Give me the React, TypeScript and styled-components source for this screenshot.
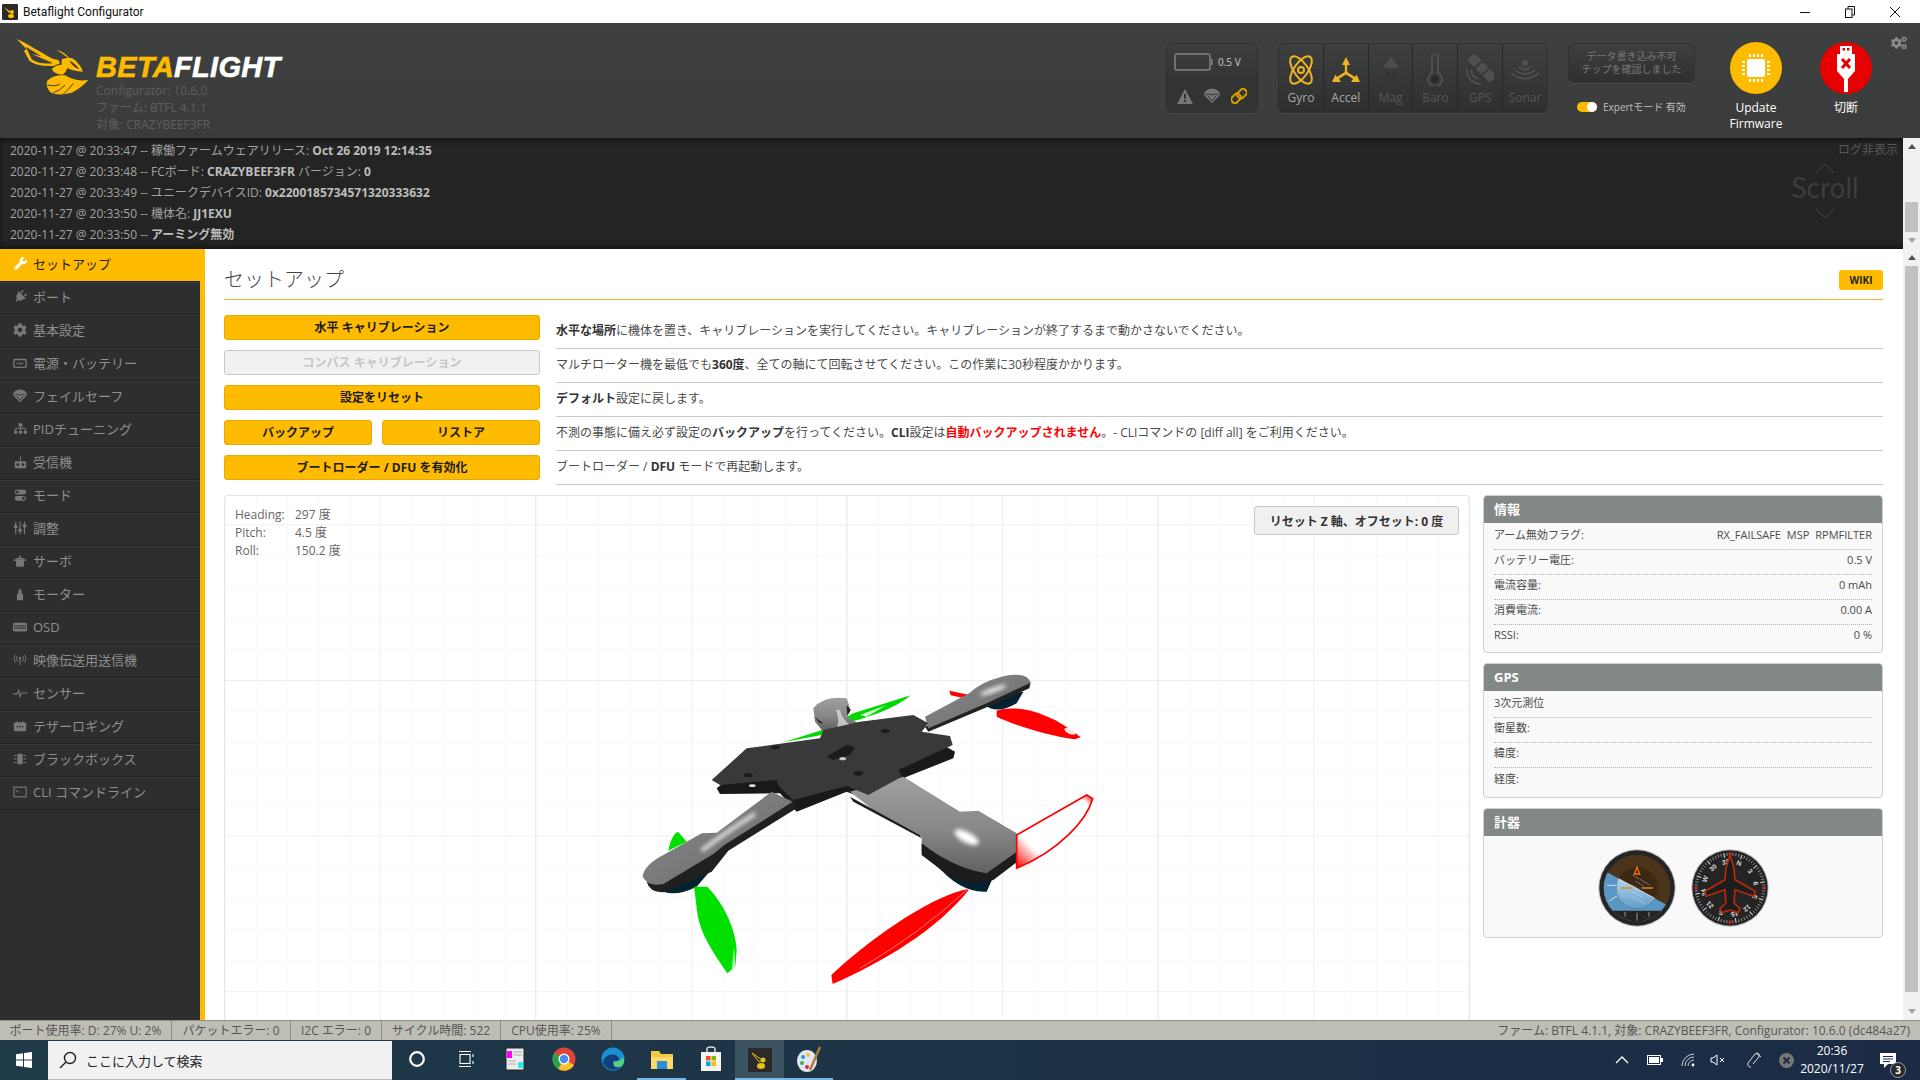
import React from 'react';
import styled, { createGlobalStyle } from 'styled-components';
import { FaWrench, FaPlug, FaCog, FaSitemap, FaCogs } from 'react-icons/fa';

const UI = `"Open Sans", "Noto Sans CJK JP", sans-serif`;
const YEL = '#ffbb00';

const Global = createGlobalStyle`
  html, body { margin: 0; padding: 0; overflow: hidden; background: #fff; }
  * { box-sizing: border-box; }
  #root { width: 1920px; height: 1080px; }
  strong { font-weight: 700; }
`;

const Shell = styled.div`
  width: 1920px; height: 1080px; display: flex; flex-direction: column;
  font-family: ${UI}; font-size: 12px; overflow: hidden;
`;

/* window title */
const TitleBar = styled.div`
  height: 23px; background: #fff; display: flex; align-items: center; flex: none;
  font-family: Roboto, "Noto Sans", sans-serif; font-size: 12px; color: #111; padding: 0 3px 0 2px;
`;
const AppTile = styled.span`
  width: 16px; height: 16px; background: #2b2b2b; margin-right: 5px; display: flex; border-radius: 1px;
`;
const WinControls = styled.div`margin-left: auto; display: flex;`;
const WinBtn = styled.span`
  width: 45px; height: 23px; display: flex; align-items: center; justify-content: center;
`;

/* header */
const Header = styled.header`
  height: 115px; flex: none; display: flex; align-items: flex-start;
  background: linear-gradient(#3f4140, #3a3c3b);
  padding: 20px 13px 0 10px;
`;
const Brand = styled.div`display: flex; align-items: flex-start; margin-right: auto; margin-top: -13px;`;
const BrandText = styled.div`padding-top: 23px; color: #5d5f5e; line-height: 17px;`;
const Wordmark = styled.div`
  font-family: "Liberation Sans", Arial, sans-serif; font-weight: 700; font-style: italic;
  font-size: 29px; line-height: 29px; color: #fff; white-space: nowrap; letter-spacing: 0.3px;
  -webkit-text-stroke: 0.6px currentColor;
`;
const WordYel = styled.span`color: ${YEL};`;

const PanelDark = styled.div`
  border-radius: 6px; border: 1px solid #2f3130; box-shadow: 0 1px 0 #4a4c4b;
  background: linear-gradient(#3e403f, #2e2f2f); overflow: hidden;
`;
const BatteryPanel = styled(PanelDark)`width: 92px; height: 70px; display: flex; flex-direction: column;`;
const BatteryTop = styled.div`
  height: 36px; display: flex; align-items: center; padding-left: 7px; gap: 4px;
  color: #ccc; font-size: 10px; background: linear-gradient(#3d3f3e, #333534);
`;
const BatteryBottom = styled.div`
  flex: 1; display: flex; align-items: center; justify-content: space-around; padding: 0 4px;
  background: #323433;
`;
const SensorPanel = styled(PanelDark)`width: 270px; height: 70px; display: flex; margin-left: 20px;`;
const SensorCell = styled.div<{ $on?: boolean }>`
  flex: 1; display: flex; flex-direction: column; align-items: center; height: 100%;
  border-right: 1px solid #262727; padding-top: 7px; color: ${p => (p.$on ? '#a8a8a8' : '#565756')};
  &:last-child { border-right: none; }
`;
const SensorGlyph = styled.div`height: 38px; display: flex; align-items: center; justify-content: center;`;
const SensorLabel = styled.div`font-size: 12px; line-height: 16px; margin-top: 1px;`;

const MidCol = styled.div`width: 127px; margin-left: 20px; display: flex; flex-direction: column;`;
const FlashBox = styled(PanelDark)`
  height: 40px; color: #767876; font-size: 10px; line-height: 13px; text-align: center; padding-bottom: 1px;
  display: flex; align-items: center; justify-content: center;
`;
const ExpertRow = styled.div`
  display: flex; align-items: center; gap: 6px; margin-top: 17px; padding-left: 9px;
  color: #bdbdbd; font-size: 10px; line-height: 14px; white-space: nowrap;
`;
const Toggle = styled.span`
  width: 20px; height: 10px; border-radius: 5px; background: ${YEL}; display: flex; justify-content: flex-end; flex: none;
`;
const ToggleKnob = styled.span`width: 10px; height: 10px; border-radius: 5px; background: #fff;`;
const RoundCol = styled.div<{ $ml: number }>`
  width: 80px; margin-left: ${p => p.$ml}px; margin-top: -1px; display: flex; flex-direction: column; align-items: center;
  color: #fff; font-size: 12px; line-height: 16px; text-align: center;
`;
const RoundBtn = styled.div<{ $bg: string }>`
  width: 52px; height: 52px; border-radius: 50%; background: ${p => p.$bg}; margin-bottom: 6px;
  display: flex; align-items: center; justify-content: center;
`;
const Gear = styled(FaCogs)`color: #8a8c8b; margin: -8px 0 0 5px; font-size: 16px; flex: none;`;

/* log */
const LogBar = styled.div`
  height: 111px; flex: none; display: flex; background: #242424;
  box-shadow: inset 0 4px 5px -2px #111, inset 0 -4px 5px -2px #111;
`;
const LogBody = styled.div`flex: 1; position: relative; padding: 2px 0 0 10px; color: #a3a3a3; line-height: 21px;`;
const LogLine = styled.div`
  white-space: nowrap; height: 21px;
  strong { color: #bdbdbd; }
`;
const LogHide = styled.div`position: absolute; right: 5px; top: 3px; color: #575757; line-height: 18px;`;
const ScrollHint = styled.div`
  position: absolute; right: 45px; top: 25px; width: 66px; color: #3d3d3d;
  display: flex; flex-direction: column; align-items: center;
  font-family: Lato, sans-serif; font-size: 28px; line-height: 28px;
`;
const ScrollWord = styled.span`padding-bottom: 8px;`;

/* scrollbars */
const ScrollBar = styled.div`width: 17px; flex: none; background: #f1f1f1; display: flex; flex-direction: column;`;
const ScrollTrack = styled.div<{ $top: number }>`flex: 1; padding: ${p => p.$top}px 2px 0;`;
const ScrollThumb = styled.div<{ $h: number }>`height: ${p => p.$h}px; background: #c1c1c1;`;
const ScrollArrow = styled.div`height: 17px; display: flex; align-items: center; justify-content: center; flex: none;`;
const TriUp = styled.span`width: 0; height: 0; border: 4px solid transparent; border-top: none; border-bottom: 5px solid #505050;`;
const TriDown = styled.span`width: 0; height: 0; border: 4px solid transparent; border-bottom: none; border-top: 5px solid #a3a3a3;`;

/* main row */
const MainRow = styled.div`flex: 1; min-height: 0; display: flex;`;
const Nav = styled.nav`width: 205px; flex: none; background: #2e2e2e; border-right: 5px solid ${YEL};`;
const NavItem = styled.div<{ $active?: boolean }>`
  height: 33px; display: flex; align-items: center; font-size: 13px; white-space: nowrap;
  padding: 0 0 4px 13px; gap: 6px;
  background: ${p => (p.$active ? YEL : '#2e2e2e')};
  color: ${p => (p.$active ? '#222' : '#8f8f8f')};
  border-bottom: 1px solid ${p => (p.$active ? '#222' : '#212121')};
  border-top: 1px solid ${p => (p.$active ? YEL : '#393939')};
`;
const NavGlyph = styled.span<{ $active?: boolean }>`
  width: 14px; height: 14px; display: flex; align-items: center; justify-content: center; flex: none;
  color: ${p => (p.$active ? '#fff' : '#787878')};
`;
const TiltPlug = styled(FaPlug)`transform: rotate(45deg) scaleX(-1);`;

const Page = styled.main`flex: 1; min-width: 0; background: #fff; padding: 20px 20px 0 19px; display: flex; flex-direction: column; overflow: hidden;`;
const TitleRow = styled.div`
  height: 31px; flex: none; display: flex; align-items: flex-start; justify-content: space-between;
  border-bottom: 1px solid #f2b632;
`;
const PageTitle = styled.h1`margin: 1px 0 0; font-size: 20px; line-height: 20px; font-weight: 300; color: #444;`;
const WikiBtn = styled.div`
  width: 44px; height: 20px; background: ${YEL}; border-radius: 3px; color: #222; font-weight: 700; font-size: 10px;
  display: flex; align-items: center; justify-content: center; margin-top: 1px;
`;
const ActionGrid = styled.div`display: grid; grid-template-columns: 316px 1fr; column-gap: 16px; margin-top: 15px; flex: none;`;
const BtnCol = styled.div`display: flex; flex-direction: column; gap: 10px; align-self: start;`;
const BtnRow = styled.div`display: flex; justify-content: space-between;`;
const ActionBtn = styled.div<{ $disabled?: boolean; $w?: number }>`
  height: 25px; flex: none; border-radius: 3px; font-weight: 700; font-size: 12px; padding-bottom: 1px;
  display: flex; align-items: center; justify-content: center; white-space: nowrap;
  width: ${p => (p.$w ? `${p.$w}px` : '100%')};
  background: ${p => (p.$disabled ? '#f1f1f1' : YEL)};
  border: 1px solid ${p => (p.$disabled ? '#c8c8c8' : '#e8aa00')};
  color: ${p => (p.$disabled ? '#c6c6c6' : '#1c1c1c')};
`;
const DescCol = styled.div`display: flex; flex-direction: column;`;
const DescRow = styled.div`
  height: 34px; border-bottom: 1px solid #c8c8c8; display: flex; align-items: center; padding-bottom: 3px;
  color: #4a4a4a; font-size: 12px; white-space: nowrap;
  strong { color: #333; }
`;
const RedText = styled.strong`color: #f00 !important;`;

const Lower = styled.div`flex: 1; min-height: 0; display: flex; gap: 13px; margin-top: 10px;`;
const Canvas = styled.div`
  flex: 1; position: relative; border: 1px solid #e6e6e6; border-bottom: none; border-radius: 4px 4px 0 0; overflow: hidden;
  background-color: #fff;
  background-image:
    linear-gradient(90deg, #ececec 1px, transparent 1px),
    linear-gradient(#ececec 1px, transparent 1px),
    linear-gradient(90deg, #f3f3f3 1px, transparent 1px),
    linear-gradient(#f3f3f3 1px, transparent 1px),
    linear-gradient(90deg, #f8f8f8 1px, transparent 1px),
    linear-gradient(#f8f8f8 1px, transparent 1px);
  background-size: 311.2px 100%, 100% 622.4px, 155.6px 100%, 100% 155.6px, 31.12px 100%, 100% 31.12px;
  background-position: 310px 0, 0 184px, 154.6px 0, 0 28.4px, 0 0, 0 28.4px;
`;
const Readout = styled.div`
  position: absolute; left: 10px; top: 10px; display: grid; grid-template-columns: 60px auto;
  color: #666; font-size: 12px; line-height: 18px;
`;
const ResetBtn = styled.div`
  position: absolute; right: 10px; top: 10px; width: 205px; height: 29px;
  background: #f0f0f0; border: 1px solid #c9c9c9; border-radius: 3px; color: #333; font-weight: 700; font-size: 12px;
  display: flex; align-items: center; justify-content: center; white-space: nowrap;
`;
const DroneSvg = styled.svg`position: absolute; left: 395px; top: 164px;`;

const SideCol = styled.div`width: 400px; flex: none; display: flex; flex-direction: column; gap: 10px;`;
const InfoPanel = styled.section`border: 1px solid #d0d0d0; border-radius: 4px; background: #f9f9f9; overflow: hidden; flex: none;`;
const InfoHead = styled.div`
  height: 27px; background: #828885; color: #fff; font-weight: 700; font-size: 13px; line-height: 27px; padding-left: 10px;
`;
const InfoBody = styled.div<{ $pb: number }>`padding: 2px 10px ${p => p.$pb}px;`;
const InfoRow = styled.div`
  height: 25px; display: flex; justify-content: space-between; align-items: center; padding-bottom: 6px;
  color: #4b4b4b; font-size: 11px; border-bottom: 1px dotted #b5b5b5; white-space: nowrap;
  &:last-child { border-bottom: none; }
`;
const Flags = styled.span`word-spacing: 3px;`;
const GaugeBody = styled.div`display: flex; justify-content: center; gap: 15px; padding: 13px 0 10px;`;

/* status */
const StatusBar = styled.footer`
  height: 20px; flex: none; display: flex; background: #bfbeb5; color: #555; font-size: 12px; line-height: 20px;
  border-top: 1px solid #8f8f8a; white-space: nowrap;
`;
const StatusCell = styled.div<{ $w: number }>`width: ${p => p.$w}px; text-align: center; border-right: 1px solid #8f8f8a; flex: none;`;
const StatusRight = styled.div`margin-left: auto; padding-right: 10px;`;

/* task bar */
const TaskBar = styled.div`
  height: 40px; flex: none; display: flex; align-items: stretch; color: #fff;
  background: linear-gradient(90deg, #1f3b49, #1d3347 50%, #1b2b45);
`;
const StartBtn = styled.div`width: 48px; display: flex; align-items: center; justify-content: center; flex: none;`;
const SearchBox = styled.div`
  width: 344px; flex: none; background: #f1f1f1; margin-top: 1px; border-bottom: 1px solid #bbb;
  display: flex; align-items: center; padding-left: 11px; gap: 9px; color: #222; font-size: 13px;
`;
const TaskSlot = styled.div<{ $open?: boolean; $active?: boolean }>`
  width: 49px; flex: none; display: flex; align-items: center; justify-content: center;
  background: ${p => (p.$active ? '#3c5362' : 'transparent')};
  border-bottom: 2px solid ${p => (p.$open ? '#76b9ed' : 'transparent')};
  padding-top: ${p => (p.$open ? 2 : 0)}px;
`;
const Tray = styled.div`margin-left: auto; display: flex; align-items: center; padding-right: 12px;`;
const TrayCell = styled.div<{ $w: number }>`width: ${p => p.$w}px; display: flex; align-items: center; justify-content: center; position: relative;`;
const Clock = styled.div`text-align: center; font-size: 12px; line-height: 18px; white-space: nowrap;`;
const Badge = styled.span`
  position: absolute; right: 2px; bottom: -10px; width: 16px; height: 16px; border-radius: 50%;
  background: #2a2a2a; border: 1px solid #999; color: #fff; font-size: 10px; font-weight: 700; line-height: 14px; text-align: center;
`;

/* drawings */
const Wasp = () => (
  <svg width="86" height="70" viewBox="0 0 258 210" fill={YEL}>
    <path fillRule="evenodd" d="M20 27 L40 36 L150 100 L130 108 Q80 110 58 92 L42 62 L50 58 Z M48 50 L128 100 Q85 104 65 88 L53 62 Z" />
    <path d="M65 72 L145 90 L150 100 L120 95 Z" />
    <path d="M140 60 Q165 65 180 88 Q160 72 140 60 Z" />
    <path fillRule="evenodd" d="M155 88 Q185 76 200 95 Q216 112 218 125 Q190 124 172 114 Q168 128 158 134 Q135 134 125 118 Q135 104 155 104 Z M178 92 Q195 98 208 118 Q188 110 178 92 Z" />
    <path d="M112 152 Q130 134 165 136 Q195 156 235 150 Q212 176 185 188 Q140 200 120 185 Q105 168 112 152 Z" />
    <g stroke="#3c3e3d" strokeWidth="3" fill="none">
      <path d="M112 165 Q140 170 150 162" />
      <path d="M130 188 Q150 182 165 165" />
      <path d="M160 192 Q175 180 190 160" />
    </g>
  </svg>
);

const Battery = () => (
  <svg width="40" height="18" viewBox="0 0 40 18">
    <rect x="1" y="1" width="35" height="16" rx="2" fill="none" stroke="#707170" strokeWidth="2" />
    <rect x="36" y="6" width="3" height="6" fill="#707170" />
  </svg>
);
const Warn = () => (
  <svg width="16" height="15" viewBox="0 0 16 15">
    <path d="M8 0 L16 15 L0 15 Z" fill="#777" />
    <rect x="7" y="5" width="2" height="5" fill="#333" />
    <rect x="7" y="11" width="2" height="2" fill="#333" />
  </svg>
);
const Chute = ({ color = '#777', size = 16 }: { color?: string; size?: number }) => (
  <svg width={size} height={size} viewBox="0 0 16 16">
    <path d="M0 7 A8 6.5 0 0 1 16 7 L8 15 Z" fill={color} />
    <path d="M4 8 L8 13 L12 8 M1 7 Q4 5 8 7 Q12 5 15 7" stroke="#333" strokeWidth="1" fill="none" />
  </svg>
);
const Chain = () => (
  <svg width="16" height="16" viewBox="0 0 16 16" fill="none" stroke="#d99e00" strokeWidth="2">
    <rect x="8" y="0.5" width="7" height="10" rx="3" transform="rotate(45 11 5)" />
    <rect x="1" y="5.5" width="7" height="10" rx="3" transform="rotate(45 5 11)" />
  </svg>
);
const GyroIcon = () => (
  <svg width="24" height="30" viewBox="0 0 24 30" fill="none" stroke="#f0b323" strokeWidth="2">
    <ellipse cx="12" cy="15" rx="7" ry="16" transform="rotate(35 12 15)" />
    <ellipse cx="12" cy="15" rx="7" ry="16" transform="rotate(-35 12 15)" />
    <circle cx="12" cy="15" r="3" />
  </svg>
);
const AccelIcon = () => (
  <svg width="28" height="26" viewBox="0 0 28 26" fill="#f0b323">
    <path d="M14 0 L18 8 L15.2 8 L15.2 15 L23 20 L24.5 17.5 L28 25 L19 25 L21 21.8 L14 17.4 L7 21.8 L9 25 L0 25 L3.5 17.5 L5 20 L12.8 15 L12.8 8 L10 8 Z" />
  </svg>
);
const MagIcon = () => (
  <svg width="16" height="12" viewBox="0 0 16 12"><path d="M8 0 L16 12 L0 12 Z" fill="#4b4c4b" /></svg>
);
const MagLetter = styled.span`font-size: 16px; line-height: 16px; color: #303130; font-weight: 400;`;
const MagStack = styled.div`display: flex; flex-direction: column; align-items: center; gap: 1px;`;
const BaroIcon = () => (
  <svg width="16" height="32" viewBox="0 0 16 32" fill="none" stroke="#4e4f4e" strokeWidth="2">
    <path d="M5 3 A3 3 0 0 1 11 3 L11 19 A7 7 0 1 1 5 19 Z" />
    <circle cx="8" cy="25" r="3.5" fill="#2a2a2a" stroke="none" />
  </svg>
);
const GpsIcon = () => (
  <svg width="28" height="30" viewBox="0 0 28 30">
    <g transform="rotate(-45 16 13)" fill="#4e4f4e">
      <rect x="11" y="9" width="10" height="8" />
      <rect x="11" y="-3" width="10" height="10" />
      <rect x="11" y="19" width="10" height="10" />
    </g>
    <path d="M1 13 A14 14 0 0 0 15 29 M5 15 A9 9 0 0 0 13 24" stroke="#4e4f4e" strokeWidth="2" fill="none" />
  </svg>
);
const SonarIcon = () => (
  <svg width="28" height="24" viewBox="0 0 28 24" fill="none" stroke="#4e4f4e" strokeWidth="2">
    <circle cx="14" cy="5" r="3" fill="#4e4f4e" stroke="none" />
    <path d="M8 9 Q14 14 20 9 M4 12 Q14 20 24 12 M0 15 Q14 26 28 15" />
  </svg>
);
const ChipIcon = () => (
  <svg width="32" height="32" viewBox="0 0 32 32" fill="#fff">
    <rect x="7" y="7" width="18" height="18" rx="2" />
    <g>
      {[9, 13, 17, 21].map(v => (
        <React.Fragment key={v}>
          <rect x={v} y="2" width="2" height="3" />
          <rect x={v} y="27" width="2" height="3" />
          <rect x="2" y={v} width="3" height="2" />
          <rect x="27" y={v} width="3" height="2" />
        </React.Fragment>
      ))}
    </g>
  </svg>
);
const UsbIcon = () => (
  <svg width="26" height="48" viewBox="0 0 26 48" fill="#fff">
    <rect x="7" y="2" width="12" height="8" />
    <rect x="9.5" y="4" width="2.5" height="2.5" fill="#e60000" />
    <rect x="14" y="4" width="2.5" height="2.5" fill="#e60000" />
    <path d="M4 10 L22 10 L22 27 L15 35 L15 48 L11 48 L11 35 L4 27 Z" />
    <path d="M9 15 L17 24 M17 15 L9 24" stroke="#e60000" strokeWidth="3" />
  </svg>
);

const I = ({ children }: { children: React.ReactNode }) => (
  <svg width="14" height="14" viewBox="0 0 16 16" fill="currentColor" stroke="none">{children}</svg>
);
const NAV: { label: string; icon: React.ReactNode }[] = [
  { label: 'セットアップ', icon: <FaWrench size={13} /> },
  { label: 'ポート', icon: <TiltPlug size={13} /> },
  { label: '基本設定', icon: <FaCog size={14} /> },
  { label: '電源・バッテリー', icon: <I><rect x="1" y="4" width="14" height="9" rx="1" fill="none" stroke="currentColor" strokeWidth="1.5" /><path d="M4 8.5 H7 L8 7 L9 10 L10 8.5 H12" stroke="currentColor" fill="none" /></I> },
  { label: 'フェイルセーフ', icon: <Chute color="currentColor" size={14} /> },
  { label: 'PIDチューニング', icon: <FaSitemap size={13} /> },
  { label: '受信機', icon: <I><rect x="8" y="1" width="1" height="6" /><rect x="2" y="7" width="13" height="8" rx="1" /><circle cx="5.5" cy="11" r="1.6" fill="#2e2e2e" /><circle cx="11.5" cy="11" r="1.6" fill="#2e2e2e" /></I> },
  { label: 'モード', icon: <I><rect x="2" y="2" width="13" height="5.5" rx="2.7" /><rect x="2" y="9" width="13" height="5.5" rx="2.7" /><circle cx="5" cy="4.7" r="1.6" fill="#2e2e2e" /><circle cx="12" cy="11.7" r="1.6" fill="#2e2e2e" /></I> },
  { label: '調整', icon: <I><rect x="2.4" y="1" width="1.4" height="14" /><rect x="7.4" y="1" width="1.4" height="14" /><rect x="12.4" y="1" width="1.4" height="14" /><rect x="1" y="5" width="4.2" height="3" /><rect x="6" y="9" width="4.2" height="3" /><rect x="11" y="4" width="4.2" height="3" /></I> },
  { label: 'サーボ', icon: <I><rect x="7" y="2" width="2" height="2" /><rect x="1" y="6" width="14" height="2" rx="1" /><path d="M3 5 Q8 3 13 5 L13 6 L3 6 Z" /><path d="M3.5 8 H12.5 V13 Q12.5 14.5 11 14.5 H5 Q3.5 14.5 3.5 13 Z" /></I> },
  { label: 'モーター', icon: <I><path d="M8 1 L10 5 L10 8 L11.5 8 V15 H4.5 V8 H6 V5 Z" /></I> },
  { label: 'OSD', icon: <I><rect x="0" y="3" width="16" height="10" rx="2" /><text x="8" y="10.6" textAnchor="middle" fontSize="6.4" fontWeight="700" fill="#2e2e2e" fontFamily="Liberation Sans">OSD</text></I> },
  { label: '映像伝送用送信機', icon: <I><circle cx="8" cy="6" r="1.4" /><rect x="7.4" y="6" width="1.2" height="8" /><path d="M5 3 Q3 6 5 10 M11 3 Q13 6 11 10 M2.6 2 Q0 6 2.6 11 M13.4 2 Q16 6 13.4 11" stroke="currentColor" fill="none" /></I> },
  { label: 'センサー', icon: <I><path d="M0 9 H5 L6.5 5 L8 13 L9.5 8 H16" fill="none" stroke="currentColor" strokeWidth="1.2" /></I> },
  { label: 'テザーロギング', icon: <I><rect x="1" y="4" width="14" height="10" rx="1.5" /><rect x="4" y="3" width="2" height="2" /><rect x="10" y="3" width="2" height="2" /><rect x="4" y="8" width="2" height="1.4" fill="#2e2e2e" /><rect x="7" y="8" width="2" height="1.4" fill="#2e2e2e" /><rect x="10" y="8" width="2" height="1.4" fill="#2e2e2e" /></I> },
  { label: 'ブラックボックス', icon: <I><rect x="5" y="2" width="6" height="12" rx="1" /><rect x="1" y="3.5" width="3" height="1.2" /><rect x="1" y="7.4" width="3" height="1.2" /><rect x="1" y="11.3" width="3" height="1.2" /><rect x="12" y="3.5" width="3" height="1.2" /><rect x="12" y="7.4" width="3" height="1.2" /><rect x="12" y="11.3" width="3" height="1.2" /></I> },
  { label: 'CLI コマンドライン', icon: <I><rect x="1" y="2.5" width="14" height="11" fill="none" stroke="currentColor" strokeWidth="1.3" /><path d="M3 6 L5 7 L3 8 M6 8 H8" stroke="currentColor" fill="none" /></I> },
];

const Drone = () => (
  <DroneSvg width="500" height="340" viewBox="0 0 1500 1020">
    <defs>
      <linearGradient id="gArm" x1="0" y1="0" x2="1" y2="1">
        <stop offset="0" stopColor="#8a8a8a" />
        <stop offset="1" stopColor="#6a6a6a" />
      </linearGradient>
      <linearGradient id="gPad" x1="0" y1="0" x2="0" y2="1">
        <stop offset="0" stopColor="#a0a0a0" />
        <stop offset="0.55" stopColor="#868686" />
        <stop offset="1" stopColor="#5e5e5e" />
      </linearGradient>
      <linearGradient id="gBlade" x1="0" y1="1" x2="1" y2="0">
        <stop offset="0" stopColor="#f00" />
        <stop offset="0.25" stopColor="#fff" />
        <stop offset="0.9" stopColor="#fff" />
        <stop offset="1" stopColor="#f00" />
      </linearGradient>
      <filter id="soft" x="-40%" y="-40%" width="180%" height="180%">
        <feGaussianBlur stdDeviation="7" />
      </filter>
    </defs>
    {/* rear props */}
    <path d="M490 247 L600 212 L700 160 L872 106 C840 135 760 170 690 186 L600 226 Z" fill="#00d800" />
    <path d="M720 165 L800 135 L740 170 Z" fill="#d8ffd8" />
    <path d="M988 92 L1045 104 L1030 114 L992 106 Z" fill="#f00" />
    <path d="M1130 152 C1190 132 1290 155 1382 232 L1364 238 C1290 228 1190 198 1130 170 Z" fill="#f00" />
    <ellipse cx="1350" cy="214" rx="18" ry="8" fill="#fff" opacity=".9" transform="rotate(25 1350 214)" />
    {/* rear right arm */}
    <path d="M1095 135 Q1130 165 1190 130 L1210 95 L1100 110 Z" fill="#04222f" />
    <path d="M1085 132 L1232 66 L1228 85 L1100 142 L925 215 L915 200 Z" fill="#222" />
    <path d="M915 170 L1050 98 Q1090 60 1170 45 Q1225 40 1232 68 L1100 130 L925 205 Z" fill="url(#gArm)" />
    <ellipse cx="1120" cy="90" rx="42" ry="7" fill="#f4f4f4" filter="url(#soft)" transform="rotate(-20 1120 90)" />
    {/* rear left arm */}
    <path d="M585 185 L580 145 Q610 105 680 115 L692 150 L680 170 L725 195 L610 215 Z" fill="url(#gPad)" />
    <path d="M648 150 Q660 180 650 205 L690 195 Q665 175 660 150 Z" fill="#e4e4e4" opacity=".7" />
    <path d="M582 170 L610 190 L600 190 Z M680 135 L692 150 L682 168 Z" fill="#1f1f1f" />
    {/* lower plate */}
    <path d="M290 385 L395 300 L600 262 L890 210 L1005 275 L1000 295 L860 350 L745 420 L680 395 L530 455 L480 400 L300 402 Z" fill="#191919" />
    {/* front left arm */}
    <path d="M130 695 Q170 710 230 680 L290 610 L280 590 L180 610 Z" fill="#04222f" />
    <path d="M190 655 L240 630 L215 640 Z" fill="#1a9ed0" stroke="#1a9ed0" strokeWidth="2" />
    <path d="M80 665 Q90 700 135 696 L275 635 L325 572 L530 445 L515 410 L120 660 Z" fill="#202020" />
    <path d="M68 650 Q72 615 130 585 L245 520 L290 518 L455 395 L518 425 L312 556 L280 582 L130 672 Q85 682 68 650 Z" fill="url(#gArm)" />
    <path d="M245 572 Q320 515 405 462" stroke="#f4f4f4" strokeWidth="10" fill="none" filter="url(#soft)" />
    {/* front right arm */}
    <path d="M945 610 Q1020 700 1100 695 L1120 650 L1000 600 Z" fill="#04222f" />
    <path d="M942 600 Q965 640 1010 652 L1000 635 L950 600 Z" fill="#7cecf6" />
    <path d="M690 395 L850 350 L1020 455 L1075 452 L1190 520 Q1210 550 1205 590 L1100 650 Q1010 640 905 575 L905 530 L900 525 L760 450 Z" fill="url(#gPad)" />
    <path d="M905 550 Q1000 625 1100 640 L1205 565 L1205 595 L1120 660 Q1060 680 990 650 L905 585 Z" fill="#1c1c1c" />
    <path d="M690 410 L900 525 L905 535 L700 425 Z" fill="#1f1f1f" />
    <ellipse cx="1040" cy="532" rx="40" ry="16" fill="#fff" filter="url(#soft)" transform="rotate(28 1040 532)" />
    {/* top plate */}
    <path d="M275 360 L380 265 L600 235 L610 210 L720 185 L880 165 L925 190 L905 215 L990 228 L998 255 L835 330 L845 350 L745 405 L680 378 L520 420 L478 380 L470 360 L300 375 Z" fill="#393939" />
    <g fill="#1b1b1b">
      <ellipse cx="466" cy="262" rx="13" ry="6" />
      <ellipse cx="796" cy="213" rx="13" ry="6" />
      <ellipse cx="385" cy="345" rx="13" ry="6" />
      <ellipse cx="715" cy="340" rx="14" ry="7" />
      <path d="M620 290 L680 255 L705 262 L690 285 L640 300 Z" />
    </g>
    <ellipse cx="668" cy="296" rx="10" ry="5" fill="#ccc" />
    <ellipse cx="397" cy="377" rx="10" ry="4" fill="#ddd" />
    {/* front props */}
    <path d="M145 572 C150 540 165 515 175 516 L200 545 Z" fill="#00e000" />
    <path d="M222 680 L262 680 C310 730 345 800 350 870 L346 920 L322 940 C280 880 240 820 232 760 Z" fill="#00e000" />
    <path d="M342 860 L346 920 L335 930 Z" fill="#b0ffb0" />
    <path d="M1190 525 L1400 405 L1418 416 C1400 480 1320 570 1190 625 Z" fill="url(#gBlade)" stroke="#f00" strokeWidth="5" />
    <path d="M1040 688 C950 705 780 810 634 945 L638 972 C790 905 950 810 1046 690 Z" fill="#f00" />
    <path d="M1040 690 Q900 820 720 925" stroke="#fff" strokeWidth="2" fill="none" opacity=".7" />
  </DroneSvg>
);

const AttitudeGauge = () => (
  <svg width="78" height="78" viewBox="-117 -117 234 234">
    <defs>
      <clipPath id="attFace"><circle r="100" /></clipPath>
      <clipPath id="attInner"><circle r="62" /></clipPath>
      <linearGradient id="attSky" x1="0" y1="0" x2="0" y2="1">
        <stop offset="0" stopColor="#b8d9ec" />
        <stop offset="1" stopColor="#5b97c5" />
      </linearGradient>
    </defs>
    <circle r="116" fill="#bbb" />
    <circle r="113" fill="#252525" />
    <g clipPath="url(#attFace)">
      <rect x="-110" y="-110" width="220" height="220" fill="#4b331c" />
      <path d="M-110 -58 L110 62 L110 110 L-110 110 Z" fill="#5b97c5" />
    </g>
    <g clipPath="url(#attInner)">
      <rect x="-70" y="-70" width="140" height="140" fill="#3b2815" />
      <path d="M-70 -36 L70 40 L70 70 L-70 70 Z" fill="url(#attSky)" />
      <path d="M-70 -36 L70 40" stroke="#fff" strokeWidth="2" />
    </g>
    <path d="M-73 68 H73 A100 100 0 0 1 -73 68 Z" fill="#232323" />
    <path d="M-90 -8 H-62 M-85 40 L-60 24" stroke="#eee" strokeWidth="2.5" />
    <path d="M-48 0 H-14 M14 0 H48" stroke="#e08a1e" strokeWidth="5" />
    <path d="M0 -62 L8 -42 H-8 Z" fill="none" stroke="#f07800" strokeWidth="4" />
    <path d="M-12 -38 L40 -8 M-4 -20 L22 -5 M-16 -10 L6 4 M-12 12 L14 28 M-22 22 L24 48" stroke="#eee" strokeWidth="2" strokeDasharray="3 3" />
    <path d="M0 74 V98 M-36 72 V86 M36 72 V86" stroke="#999" strokeWidth="3" />
  </svg>
);

const COMPASS = ['N', '3', '6', 'E', '12', '15', 'S', '21', '24', 'W', '30', '33'];
const CompassGauge = () => (
  <svg width="78" height="78" viewBox="-117 -117 234 234">
    <circle r="116" fill="#bbb" />
    <circle r="113" fill="#242424" />
    {Array.from({ length: 72 }, (_, i) => (
      <line key={i} x1="0" y1="-106" x2="0" y2={i % 6 === 0 ? -92 : -97} stroke="#ddd" strokeWidth={i % 6 === 0 ? 3 : 1.6} transform={`rotate(${i * 5 + 20})`} />
    ))}
    <g transform="rotate(20)">
      {COMPASS.map((t, i) => (
        <text key={t} transform={`rotate(${i * 30}) translate(0 -72)`} textAnchor="middle" fontSize="20" fontWeight="700" fill="#ddd" fontFamily="Liberation Sans, sans-serif">{t}</text>
      ))}
    </g>
    {[0, 90, 180, 270].map(a => (
      <path key={a} d="M0 -110 L6 -100 L-6 -100 Z" fill="#e02010" transform={`rotate(${a})`} />
    ))}
    <path d="M0 -98 L12 -60 L15 -25 L75 10 L72 25 L15 5 L12 45 L30 62 L25 74 L0 66 L-25 74 L-30 62 L-12 45 L-15 5 L-72 25 L-75 10 L-15 -25 L-12 -60 Z" fill="#1d1d1d" stroke="#b92a0a" strokeWidth="5" strokeLinejoin="round" />
  </svg>
);

const WinLogo = () => (
  <svg width="16" height="16" viewBox="0 0 16 16" fill="#fff">
    <path d="M0 2.2 L7 1.2 V7.5 H0 Z M8 1 L16 0 V7.5 H8 Z M0 8.5 H7 V14.8 L0 13.8 Z M8 8.5 H16 V16 L8 15 Z" />
  </svg>
);
const Magnifier = () => (
  <svg width="18" height="18" viewBox="0 0 18 18" fill="none" stroke="#222" strokeWidth="1.4">
    <circle cx="11" cy="7" r="5.5" />
    <path d="M7 11 L1 17" />
  </svg>
);
const TASK: { key: string; open?: boolean; active?: boolean; node: React.ReactNode }[] = [
  { key: 'cortana', node: <svg width="18" height="18" viewBox="0 0 18 18"><circle cx="9" cy="9" r="6.8" fill="none" stroke="#fff" strokeWidth="2.2" /></svg> },
  { key: 'tasks', node: <svg width="18" height="18" viewBox="0 0 18 18" fill="none" stroke="#fff" strokeWidth="1.1"><rect x="3" y="4.5" width="10" height="9" /><path d="M2 1.5 H14 M2 16.5 H14 M16 4 V7 M16 11 V14" /></svg> },
  { key: 'note', node: <svg width="20" height="24" viewBox="0 0 20 24"><rect x="1" y="1" width="18" height="22" rx="1" fill="#eee" stroke="#222" /><rect x="2" y="4" width="5" height="7" fill="#f0f" /><rect x="13" y="15" width="5" height="6" fill="#2ee" /><path d="M8 5 H17 M8 8 H17 M3 14 H11 M3 17 H11" stroke="#aaa" /></svg> },
  { key: 'chrome', node: <svg width="24" height="24" viewBox="0 0 24 24"><circle cx="12" cy="12" r="11.5" fill="#db4437" /><path d="M12 12 L22 18 A11.5 11.5 0 0 1 6 22 Z" fill="#fbc02d" /><path d="M12 12 L6 22 A11.5 11.5 0 0 1 2.2 6 Z" fill="#2ba24c" /><circle cx="12" cy="12" r="5.5" fill="#fff" /><circle cx="12" cy="12" r="4.2" fill="#4a8af4" /></svg> },
  { key: 'edge', node: <svg width="24" height="24" viewBox="0 0 24 24"><circle cx="12" cy="12" r="11.5" fill="#1a8fd6" /><path d="M2 16 C3 7 14 5 18 11 C19 14 15 15 13 14 C11 19 15 22 21 19 A11.5 11.5 0 0 1 2 16 Z" fill="#123f7a" /><path d="M21 19 C15 22 11 19 13 14 C15 15 20 14 22 10 C24 14 23 17 21 19 Z" fill="#50d27e" /></svg> },
  { key: 'files', open: true, node: <svg width="24" height="20" viewBox="0 0 24 20"><path d="M1 1 H9 L11 4 H23 V19 H1 Z" fill="#f6c744" /><rect x="1" y="7" width="22" height="12" fill="#fbd96b" /><rect x="7" y="11" width="10" height="8" fill="#2e8bd6" /></svg> },
  { key: 'store', node: <svg width="22" height="26" viewBox="0 0 22 26"><path d="M7 6 V3 Q7 1 11 1 Q15 1 15 3 V6" fill="none" stroke="#ddd" strokeWidth="1.5" /><rect x="1" y="6" width="20" height="19" fill="#f4f4f4" /><rect x="6" y="10" width="4.5" height="4.5" fill="#f25022" /><rect x="11.5" y="10" width="4.5" height="4.5" fill="#7fba00" /><rect x="6" y="15.5" width="4.5" height="4.5" fill="#00a4ef" /><rect x="11.5" y="15.5" width="4.5" height="4.5" fill="#ffb900" /></svg> },
  { key: 'bf', open: true, active: true, node: <svg width="24" height="24" viewBox="0 0 24 24"><rect width="24" height="24" rx="1" fill="#2a2a2a" /><path d="M4 5 L14 12 L11 14 Z" fill="none" stroke="#e3c020" /><circle cx="15" cy="12" r="2.5" fill="#e3c020" /><ellipse cx="13" cy="18" rx="4" ry="3" fill="#e3c020" /></svg> },
  { key: 'paint', open: true, node: <svg width="26" height="28" viewBox="0 0 26 28"><ellipse cx="11" cy="15" rx="10" ry="11" fill="#dfe8f2" /><circle cx="7" cy="11" r="2" fill="#2f8fe0" /><circle cx="6" cy="17" r="2" fill="#46b04a" /><circle cx="11" cy="21" r="2" fill="#e23" /><circle cx="12" cy="9" r="2" fill="#f3c32f" /><path d="M24 1 L14 24" stroke="#b07b3a" strokeWidth="2.5" /></svg> },
];

const LOG = [
  ['2020-11-27 @ 20:33:47 -- 稼働ファームウェアリリース: ', 'Oct 26 2019 12:14:35', ''],
  ['2020-11-27 @ 20:33:48 -- FCボード: ', 'CRAZYBEEF3FR', ' バージョン: ', '0'],
  ['2020-11-27 @ 20:33:49 -- ユニークデバイスID: ', '0x2200185734571320333632', ''],
  ['2020-11-27 @ 20:33:50 -- 機体名: ', 'JJ1EXU', ''],
  ['2020-11-27 @ 20:33:50 -- ', 'アーミング無効', ''],
];

const Row = ({ l, r }: { l: string; r?: React.ReactNode }) => (
  <InfoRow><span>{l}</span><span>{r}</span></InfoRow>
);

export default function App() {
  return (
    <Shell>
      <Global />
      <TitleBar>
        <AppTile>
          <svg width="16" height="16" viewBox="0 0 16 16" fill={YEL}>
            <path d="M2 3 L9 8 L7 9 Z" />
            <circle cx="10" cy="8" r="2" />
            <ellipse cx="9" cy="12" rx="3" ry="2" />
          </svg>
        </AppTile>
        Betaflight Configurator
        <WinControls>
          <WinBtn><svg width="10" height="10" viewBox="0 0 10 10"><path d="M0 5.5 H10" stroke="#111" /></svg></WinBtn>
          <WinBtn><svg width="10" height="12" viewBox="0 0 10 12" fill="none" stroke="#111"><rect x="0.5" y="3" width="6.5" height="8.5" /><path d="M3 3 V0.5 H9.5 V9 H7" /></svg></WinBtn>
          <WinBtn><svg width="12" height="12" viewBox="0 0 12 12"><path d="M1 1 L11 11 M11 1 L1 11" stroke="#111" /></svg></WinBtn>
        </WinControls>
      </TitleBar>

      <Header>
        <Brand>
          <Wasp />
          <BrandText>
            <Wordmark><WordYel>BETA</WordYel>FLIGHT</Wordmark>
            <div>Configurator: 10.6.0</div>
            <div>ファーム: BTFL 4.1.1</div>
            <div>対象: CRAZYBEEF3FR</div>
          </BrandText>
        </Brand>
        <BatteryPanel>
          <BatteryTop><Battery />0.5 V</BatteryTop>
          <BatteryBottom><Warn /><Chute /><Chain /></BatteryBottom>
        </BatteryPanel>
        <SensorPanel>
          <SensorCell $on><SensorGlyph><GyroIcon /></SensorGlyph><SensorLabel>Gyro</SensorLabel></SensorCell>
          <SensorCell $on><SensorGlyph><AccelIcon /></SensorGlyph><SensorLabel>Accel</SensorLabel></SensorCell>
          <SensorCell><SensorGlyph><MagStack><MagIcon /><MagLetter>N</MagLetter></MagStack></SensorGlyph><SensorLabel>Mag</SensorLabel></SensorCell>
          <SensorCell><SensorGlyph><BaroIcon /></SensorGlyph><SensorLabel>Baro</SensorLabel></SensorCell>
          <SensorCell><SensorGlyph><GpsIcon /></SensorGlyph><SensorLabel>GPS</SensorLabel></SensorCell>
          <SensorCell><SensorGlyph><SonarIcon /></SensorGlyph><SensorLabel>Sonar</SensorLabel></SensorCell>
        </SensorPanel>
        <MidCol>
          <FlashBox>データ書き込み不可<br />チップを確認しました</FlashBox>
          <ExpertRow><Toggle><ToggleKnob /></Toggle>Expertモード 有効</ExpertRow>
        </MidCol>
        <RoundCol $ml={21}>
          <RoundBtn $bg={YEL}><ChipIcon /></RoundBtn>
          Update<br />Firmware
        </RoundCol>
        <RoundCol $ml={10}>
          <RoundBtn $bg="#e60000"><UsbIcon /></RoundBtn>
          切断
        </RoundCol>
        <Gear />
      </Header>

      <LogBar>
        <LogBody>
          {LOG.map(l => (
            <LogLine key={l[0]}>
              {l[0]}<strong>{l[1]}</strong>{l[2]}{l[3] ? <strong>{l[3]}</strong> : null}
            </LogLine>
          ))}
          <LogHide>ログ非表示</LogHide>
          <ScrollHint>
            <svg width="20" height="10" viewBox="0 0 20 10"><path d="M1 10 L10 1 L19 10" fill="none" stroke="#4a4a4a" /></svg>
            <ScrollWord>Scroll</ScrollWord>
            <svg width="20" height="10" viewBox="0 0 20 10"><path d="M1 0 L10 9 L19 0" fill="none" stroke="#4a4a4a" /></svg>
          </ScrollHint>
        </LogBody>
        <ScrollBar>
          <ScrollArrow><TriUp /></ScrollArrow>
          <ScrollTrack $top={47}><ScrollThumb $h={30} /></ScrollTrack>
          <ScrollArrow><TriDown /></ScrollArrow>
        </ScrollBar>
      </LogBar>

      <MainRow>
        <Nav>
          {NAV.map((n, i) => (
            <NavItem key={n.label} $active={i === 0}>
              <NavGlyph $active={i === 0}>{n.icon}</NavGlyph>
              {n.label}
            </NavItem>
          ))}
        </Nav>
        <Page>
          <TitleRow>
            <PageTitle>セットアップ</PageTitle>
            <WikiBtn>WIKI</WikiBtn>
          </TitleRow>
          <ActionGrid>
            <BtnCol>
              <ActionBtn>水平 キャリブレーション</ActionBtn>
              <ActionBtn $disabled>コンパス キャリブレーション</ActionBtn>
              <ActionBtn>設定をリセット</ActionBtn>
              <BtnRow>
                <ActionBtn $w={148}>バックアップ</ActionBtn>
                <ActionBtn $w={158}>リストア</ActionBtn>
              </BtnRow>
              <ActionBtn>ブートローダー / DFU を有効化</ActionBtn>
            </BtnCol>
            <DescCol>
              <DescRow><span><strong>水平な場所</strong>に機体を置き、キャリブレーションを実行してください。キャリブレーションが終了するまで動かさないでください。</span></DescRow>
              <DescRow><span>マルチローター機を最低でも<strong>360度</strong>、全ての軸にて回転させてください。この作業に30秒程度かかります。</span></DescRow>
              <DescRow><span><strong>デフォルト</strong>設定に戻します。</span></DescRow>
              <DescRow><span>不測の事態に備え必ず設定の<strong>バックアップ</strong>を行ってください。<strong>CLI</strong>設定は<RedText>自動バックアップされません</RedText>。- CLIコマンドの [diff all] をご利用ください。</span></DescRow>
              <DescRow><span>ブートローダー / <strong>DFU</strong> モードで再起動します。</span></DescRow>
            </DescCol>
          </ActionGrid>
          <Lower>
            <Canvas>
              <Readout>
                <span>Heading:</span><span>297 度</span>
                <span>Pitch:</span><span>4.5 度</span>
                <span>Roll:</span><span>150.2 度</span>
              </Readout>
              <ResetBtn>リセット Z 軸、オフセット: 0 度</ResetBtn>
              <Drone />
            </Canvas>
            <SideCol>
              <InfoPanel>
                <InfoHead>情報</InfoHead>
                <InfoBody $pb={2}>
                  <Row l="アーム無効フラグ:" r={<Flags>RX_FAILSAFE MSP RPMFILTER</Flags>} />
                  <Row l="バッテリー電圧:" r="0.5 V" />
                  <Row l="電流容量:" r="0 mAh" />
                  <Row l="消費電流:" r="0.00 A" />
                  <Row l="RSSI:" r="0 %" />
                </InfoBody>
              </InfoPanel>
              <InfoPanel>
                <InfoHead>GPS</InfoHead>
                <InfoBody $pb={4}>
                  <Row l="3次元測位" />
                  <Row l="衛星数:" />
                  <Row l="緯度:" />
                  <Row l="経度:" />
                </InfoBody>
              </InfoPanel>
              <InfoPanel>
                <InfoHead>計器</InfoHead>
                <GaugeBody>
                  <AttitudeGauge />
                  <CompassGauge />
                </GaugeBody>
              </InfoPanel>
            </SideCol>
          </Lower>
        </Page>
        <ScrollBar>
          <ScrollArrow><TriUp /></ScrollArrow>
          <ScrollTrack $top={0}><ScrollThumb $h={726} /></ScrollTrack>
          <ScrollArrow><TriDown /></ScrollArrow>
        </ScrollBar>
      </MainRow>

      <StatusBar>
        <StatusCell $w={172}>ポート使用率: D: 27% U: 2%</StatusCell>
        <StatusCell $w={119}>パケットエラー: 0</StatusCell>
        <StatusCell $w={91}>I2C エラー: 0</StatusCell>
        <StatusCell $w={119}>サイクル時間: 522</StatusCell>
        <StatusCell $w={111}>CPU使用率: 25%</StatusCell>
        <StatusRight>ファーム: BTFL 4.1.1, 対象: CRAZYBEEF3FR, Configurator: 10.6.0 (dc484a27)</StatusRight>
      </StatusBar>

      <TaskBar>
        <StartBtn><WinLogo /></StartBtn>
        <SearchBox><Magnifier />ここに入力して検索</SearchBox>
        {TASK.map(t => (
          <TaskSlot key={t.key} $open={t.open} $active={t.active}>{t.node}</TaskSlot>
        ))}
        <Tray>
          <TrayCell $w={32}><svg width="14" height="8" viewBox="0 0 14 8"><path d="M1 7 L7 1 L13 7" fill="none" stroke="#fff" strokeWidth="1.3" /></svg></TrayCell>
          <TrayCell $w={34}><svg width="16" height="10" viewBox="0 0 16 10"><rect x="0.5" y="0.5" width="13" height="9" fill="none" stroke="#fff" /><rect x="2" y="2" width="10" height="6" fill="#fff" /><rect x="14" y="3" width="2" height="4" fill="#fff" /></svg></TrayCell>
          <TrayCell $w={32}><svg width="14" height="14" viewBox="0 0 14 14" fill="none" stroke="#ccc"><path d="M1 13 A12 12 0 0 1 13 1 M4 13 A9 9 0 0 1 13 4 M7 13 A6 6 0 0 1 13 7" /><circle cx="12" cy="12" r="1.4" fill="#fff" stroke="none" /></svg></TrayCell>
          <TrayCell $w={28}><svg width="16" height="12" viewBox="0 0 16 12" fill="none" stroke="#fff"><path d="M1 4 H3 L7 1 V11 L3 8 H1 Z M10 4 L14 8 M14 4 L10 8" /></svg></TrayCell>
          <TrayCell $w={44}><svg width="16" height="16" viewBox="0 0 16 16" fill="none" stroke="#ddd"><path d="M5 15 Q1 15 2 11 L9 2 Q11 0 13 2 Q14 4 12 6 L7 12 M10 1 L15 5" /></svg></TrayCell>
          <TrayCell $w={20}><svg width="15" height="15" viewBox="0 0 15 15"><circle cx="7.5" cy="7.5" r="7.5" fill="#777" /><path d="M4.5 4.5 L10.5 10.5 M10.5 4.5 L4.5 10.5" stroke="#1b2b45" strokeWidth="2" /></svg></TrayCell>
          <TrayCell $w={72}><Clock>20:36<br />2020/11/27</Clock></TrayCell>
          <TrayCell $w={40}>
            <svg width="16" height="15" viewBox="0 0 16 15"><path d="M0 0 H16 V11 H8 L4 15 V11 H0 Z" fill="#fff" /><path d="M3 3.5 H13 M3 6 H13 M3 8.5 H10" stroke="#1b2b45" /></svg>
            <Badge>3</Badge>
          </TrayCell>
        </Tray>
      </TaskBar>
    </Shell>
  );
}
